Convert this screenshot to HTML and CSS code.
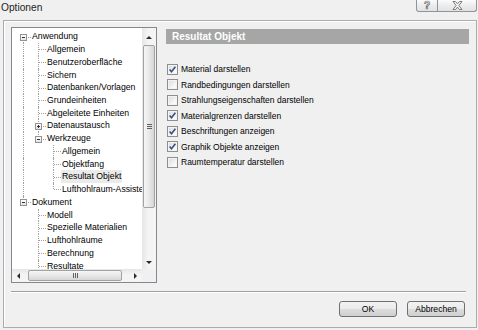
FILE: index.html
```html
<!DOCTYPE html>
<html lang="de">
<head>
<meta charset="utf-8">
<title>Optionen</title>
<link rel="stylesheet" href="styles.css">
</head>
<body>
<div class="titlebar">
  <span class="title">Optionen</span>
  <div class="caption">
    <div class="cbtn help"><span>?</span></div>
    <div class="cbtn close">
      <svg width="11" height="9" viewBox="0 0 11 9"><polygon points="1,0.5 3.6,0.5 5.5,2.9 7.4,0.5 10,0.5 6.9,4.5 10,8.5 7.4,8.5 5.5,6.1 3.6,8.5 1,8.5 4.1,4.5" fill="#f6f6f6" stroke="#6f6f6f" stroke-width="0.9"/></svg>
    </div>
  </div>
</div>
<div class="frame">
  <div class="top">
    <div class="tree">
      <div class="tree-main">
        <div class="tree-content">
          <div class="row"><span class="g c first"><span class="box minus"></span></span><span class="lbl">Anwendung</span></div>
          <div class="row"><span class="g line"></span><span class="g c mid"></span><span class="lbl">Allgemein</span></div>
          <div class="row"><span class="g line"></span><span class="g c mid"></span><span class="lbl">Benutzeroberfläche</span></div>
          <div class="row"><span class="g line"></span><span class="g c mid"></span><span class="lbl">Sichern</span></div>
          <div class="row"><span class="g line"></span><span class="g c mid"></span><span class="lbl">Datenbanken/Vorlagen</span></div>
          <div class="row"><span class="g line"></span><span class="g c mid"></span><span class="lbl">Grundeinheiten</span></div>
          <div class="row"><span class="g line"></span><span class="g c mid"></span><span class="lbl">Abgeleitete Einheiten</span></div>
          <div class="row"><span class="g line"></span><span class="g c mid"><span class="box plus"></span></span><span class="lbl">Datenaustausch</span></div>
          <div class="row"><span class="g line"></span><span class="g c last"><span class="box minus"></span></span><span class="lbl">Werkzeuge</span></div>
          <div class="row"><span class="g line"></span><span class="g"></span><span class="g c mid"></span><span class="lbl">Allgemein</span></div>
          <div class="row"><span class="g line"></span><span class="g"></span><span class="g c mid"></span><span class="lbl">Objektfang</span></div>
          <div class="row sel"><span class="g line"></span><span class="g"></span><span class="g c mid"></span><span class="lbl">Resultat Objekt</span></div>
          <div class="row"><span class="g line"></span><span class="g"></span><span class="g c last"></span><span class="lbl">Lufthohlraum-Assistent</span></div>
          <div class="row"><span class="g c last"><span class="box minus"></span></span><span class="lbl">Dokument</span></div>
          <div class="row"><span class="g"></span><span class="g c mid"></span><span class="lbl">Modell</span></div>
          <div class="row"><span class="g"></span><span class="g c mid"></span><span class="lbl">Spezielle Materialien</span></div>
          <div class="row"><span class="g"></span><span class="g c mid"></span><span class="lbl">Lufthohlräume</span></div>
          <div class="row"><span class="g"></span><span class="g c mid"></span><span class="lbl">Berechnung</span></div>
          <div class="row"><span class="g"></span><span class="g c mid"></span><span class="lbl">Resultate</span></div>
        </div>
        <div class="vscroll">
          <div class="sbtn vbtn-up"><span class="ar-up"></span></div>
          <div class="vthumb"><span class="grip-h"></span></div>
          <div class="vfill"></div>
          <div class="sbtn vbtn-down"><span class="ar-down"></span></div>
        </div>
      </div>
      <div class="hrow">
        <div class="hscroll">
          <div class="sbtn hbtn"><span class="ar-left"></span></div>
          <div class="hthumb"><span class="grip-v"></span></div>
          <div class="hfill"></div>
          <div class="sbtn hbtn"><span class="ar-right"></span></div>
        </div>
        <div class="corner"></div>
      </div>
    </div>
    <div class="panel">
      <div class="panel-head">Resultat Objekt</div>
      <div class="checks">
        <div class="chk"><span class="cb on"><svg viewBox="0 0 11 11"><path d="M2.6 5.4 L4.5 7.7 L8.4 2.7"/></svg></span><span class="cl">Material darstellen</span></div>
        <div class="chk"><span class="cb"></span><span class="cl">Randbedingungen darstellen</span></div>
        <div class="chk"><span class="cb"></span><span class="cl">Strahlungseigenschaften darstellen</span></div>
        <div class="chk"><span class="cb on"><svg viewBox="0 0 11 11"><path d="M2.6 5.4 L4.5 7.7 L8.4 2.7"/></svg></span><span class="cl">Materialgrenzen darstellen</span></div>
        <div class="chk"><span class="cb on"><svg viewBox="0 0 11 11"><path d="M2.6 5.4 L4.5 7.7 L8.4 2.7"/></svg></span><span class="cl">Beschriftungen anzeigen</span></div>
        <div class="chk"><span class="cb on"><svg viewBox="0 0 11 11"><path d="M2.6 5.4 L4.5 7.7 L8.4 2.7"/></svg></span><span class="cl">Graphik Objekte anzeigen</span></div>
        <div class="chk"><span class="cb"></span><span class="cl">Raumtemperatur darstellen</span></div>
      </div>
    </div>
  </div>
  <div class="sep"></div>
  <div class="buttons">
    <button class="btn">OK</button>
    <button class="btn">Abbrechen</button>
  </div>
</div>
</body>
</html>
```

FILE: styles.css
```css
html, body {
  margin: 0;
  padding: 0;
}
body {
  width: 478px;
  height: 330px;
  overflow: hidden;
  background: #f0f0f0;
  font-family: "Liberation Sans", Arial, sans-serif;
  font-size: 8.6px;
  color: #000;
}

/* title bar */
.titlebar {
  height: 20px;
  display: flex;
  align-items: flex-start;
}
.title {
  font-size: 10.2px;
  line-height: 16px;
  padding-left: 1px;
  color: #1e1e1e;
}
.caption {
  margin-left: auto;
  margin-right: 1px;
  display: flex;
}
.cbtn {
  height: 12px;
  box-sizing: border-box;
  border: 1px solid #8e949c;
  border-top: none;
  background: linear-gradient(#fbfbfb, #ececec 50%, #e2e2e2);
  display: flex;
  align-items: center;
  justify-content: center;
}
.help {
  width: 22px;
  border-radius: 0 0 0 3px;
  font-weight: bold;
  font-size: 10px;
  line-height: 10px;
  color: #fff;
  -webkit-text-stroke: 0.7px #6a6a6a;
}
.close {
  width: 39px;
  border-left: none;
  border-radius: 0 0 3px 0;
}

/* frame */
.frame {
  margin-left: 3px;
  width: 474px;
  height: 308px;
  box-sizing: border-box;
  border: 1px solid #acacac;
  box-shadow: inset 1px 1px 0 #fff;
  padding: 6px 7px 10px 7px;
  display: flex;
  flex-direction: column;
}
.top {
  display: flex;
  gap: 9px;
  height: 256px;
}

/* tree */
.tree {
  width: 146px;
  height: 256px;
  box-sizing: border-box;
  border: 1px solid #828790;
  background: #fff;
  display: flex;
  flex-direction: column;
  flex: none;
}
.tree-main {
  display: flex;
  height: 241px;
}
.tree-content {
  width: 130px;
  overflow: hidden;
  box-sizing: border-box;
  padding-top: 2.3px;
  padding-left: 4px;
  font-size: 8.7px;
}
.row {
  display: flex;
  height: 12.74px;
  line-height: 12.74px;
  white-space: nowrap;
}
.g {
  position: relative;
  width: 15px;
  flex: none;
}
.g.line::before,
.g.c::before {
  content: "";
  position: absolute;
  left: 7px;
  border-left: 1px dotted #a0a0a0;
  top: 0;
  bottom: 0;
}
.g.c.last::before {
  bottom: 50%;
}
.g.c.first::before {
  top: 50%;
}
.g.c::after {
  content: "";
  position: absolute;
  left: 8px;
  right: 0;
  top: 50%;
  border-top: 1px dotted #a0a0a0;
}
.box {
  position: absolute;
  z-index: 1;
  left: 4px;
  top: calc(50% - 3px);
  width: 7px;
  height: 7px;
  box-sizing: border-box;
  border: 1px solid #929292;
  background: linear-gradient(#ffffff, #e4e4e4);
}
.box::before {
  content: "";
  position: absolute;
  left: 1px;
  top: 2px;
  width: 3px;
  height: 1px;
  background: #303030;
}
.box.plus::after {
  content: "";
  position: absolute;
  left: 2px;
  top: 1px;
  width: 1px;
  height: 3px;
  background: #303030;
}
.lbl {
  padding: 0 1px;
}
.sel .lbl {
  background: #ebebeb;
}

/* scrollbars */
.vscroll {
  width: 14px;
  flex: none;
  display: flex;
  flex-direction: column;
  background: linear-gradient(to right, #e6e6e6, #f4f4f4 45%, #f4f4f4);
}
.sbtn {
  display: flex;
  align-items: center;
  justify-content: center;
  flex: none;
}
.vbtn-up {
  height: 16px;
  padding-top: 2px;
  box-sizing: border-box;
}
.vbtn-down {
  height: 14px;
}
.vthumb {
  margin: 1px 1px 0 1px;
  height: 163px;
  box-sizing: border-box;
  border: 1px solid #a2a2a2;
  border-radius: 2px;
  background: linear-gradient(to right, #f6f6f6, #e8e8e8 50%, #d6d6d6);
  display: flex;
  align-items: center;
  justify-content: center;
}
.grip-h {
  width: 5px;
  height: 5px;
  background: repeating-linear-gradient(to bottom, #5f5f5f 0 1px, transparent 1px 2px);
}
.vfill {
  flex: 1;
}
.ar-up {
  width: 0;
  height: 0;
  border-left: 3px solid transparent;
  border-right: 3px solid transparent;
  border-bottom: 3px solid #2a2a2a;
}
.ar-down {
  width: 0;
  height: 0;
  border-left: 3px solid transparent;
  border-right: 3px solid transparent;
  border-top: 3px solid #2a2a2a;
}
.ar-left {
  width: 0;
  height: 0;
  border-top: 3px solid transparent;
  border-bottom: 3px solid transparent;
  border-right: 3px solid #2a2a2a;
}
.ar-right {
  width: 0;
  height: 0;
  border-top: 3px solid transparent;
  border-bottom: 3px solid transparent;
  border-left: 3px solid #2a2a2a;
}
.hrow {
  display: flex;
  height: 13px;
}
.hscroll {
  width: 130px;
  display: flex;
  background: linear-gradient(to bottom, #e6e6e6, #f4f4f4 45%, #f4f4f4);
}
.hbtn {
  width: 13px;
}
.hthumb {
  margin: 1px 0 1px 3px;
  width: 94px;
  box-sizing: border-box;
  border: 1px solid #a2a2a2;
  border-radius: 2px;
  background: linear-gradient(to bottom, #f6f6f6, #e8e8e8 50%, #d6d6d6);
  display: flex;
  align-items: center;
  justify-content: center;
}
.grip-v {
  width: 5px;
  height: 5px;
  background: repeating-linear-gradient(to right, #5f5f5f 0 1px, transparent 1px 2px);
}
.hfill {
  flex: 1;
}
.corner {
  width: 14px;
  background: #f0f0f0;
}

/* right panel */
.panel {
  width: 303px;
  padding-top: 2px;
  flex: none;
}
.panel-head {
  height: 15px;
  line-height: 15px;
  background: #a6a6a6;
  color: #fff;
  font-weight: bold;
  font-size: 10px;
  padding-left: 6px;
}
.checks {
  margin-top: 17.5px;
}
.chk {
  height: 15.5px;
  display: flex;
  align-items: center;
  font-size: 8.5px;
}
.cb {
  width: 11px;
  height: 11px;
  margin-left: 1px;
  box-sizing: border-box;
  border: 1px solid #8e8f8f;
  background: linear-gradient(135deg, #d9d9d9, #f7f7f7 70%, #ffffff);
  box-shadow: inset 0 0 0 1px #f3f3f3;
  flex: none;
  display: flex;
}
.cb svg {
  width: 11px;
  height: 11px;
  margin: -1px;
}
.cb path {
  fill: none;
  stroke: #3b4f85;
  stroke-width: 1.6;
}
.cl {
  margin-left: 3px;
}

/* bottom */
.sep {
  margin-top: 8px;
  margin-right: 3px;
  border-top: 1px solid #a0a0a0;
  border-bottom: 1px solid #ffffff;
}
.buttons {
  margin-top: 8px;
  margin-right: 4px;
  display: flex;
  justify-content: flex-end;
  gap: 10px;
}
.btn {
  width: 58px;
  height: 16px;
  padding: 0;
  box-sizing: border-box;
  border: 1px solid #707070;
  border-radius: 3px;
  background: linear-gradient(#f2f2f2 0%, #ebebeb 50%, #dddddd 51%, #cfcfcf 100%);
  font-family: "Liberation Sans", Arial, sans-serif;
  font-size: 8.6px;
  color: #000;
  line-height: 14px;
}
```
